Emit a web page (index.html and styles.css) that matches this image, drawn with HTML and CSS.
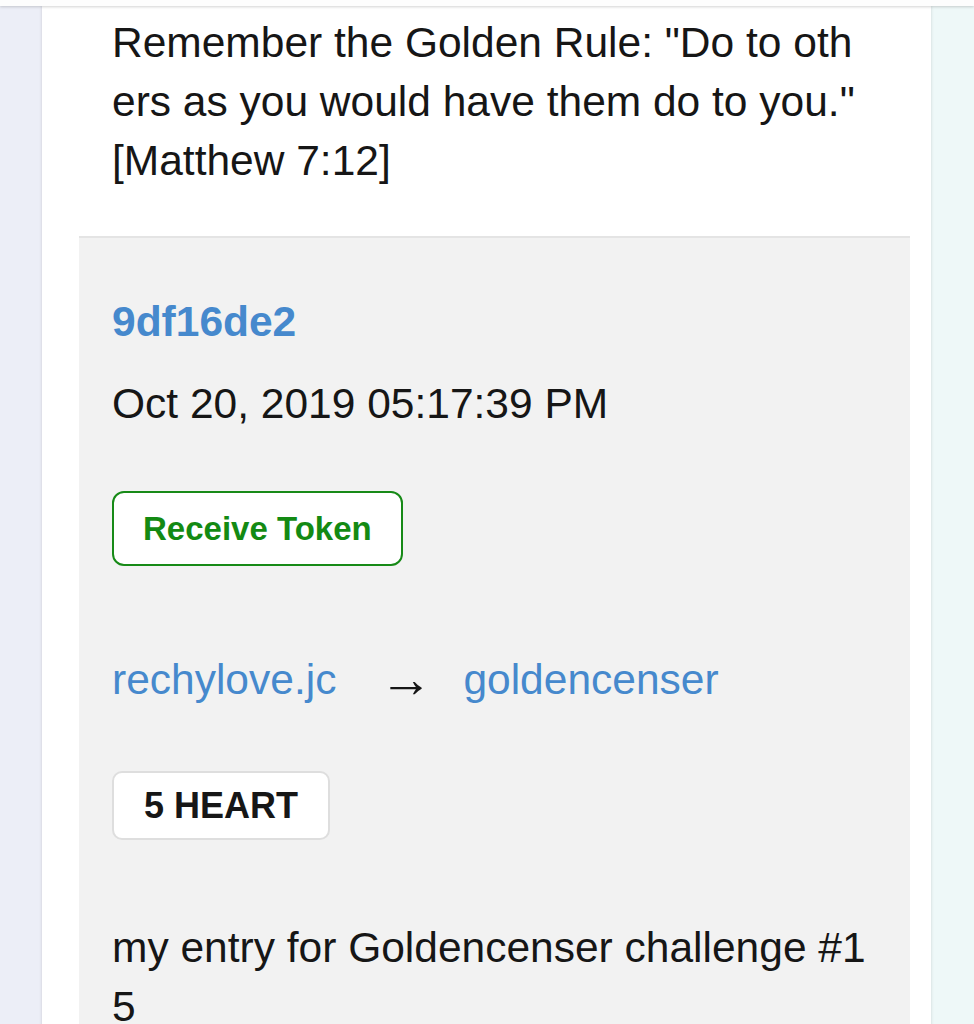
FILE: index.html
```html
<!DOCTYPE html>
<html lang="en">
<head>
    <meta charset="UTF-8">
    <meta name="viewport" content="width=device-width, initial-scale=1.0">
    <title>Token Transfer</title>
    <link rel="stylesheet" href="styles.css">
</head>
<body>
    <div class="topbar"></div>
    <div class="card">
        <p class="quote">Remember the Golden Rule: "Do to others as you would have them do to you." [Matthew 7:12]</p>
        <div class="tx">
            <a class="tx-id" href="#">9df16de2</a>
            <p class="tx-date">Oct 20, 2019 05:17:39 PM</p>
            <button class="btn-receive">Receive Token</button>
            <p class="transfer"><a href="#">rechylove.jc</a><span class="arrow">→</span><a href="#">goldencenser</a></p>
            <div class="badge">5 HEART</div>
            <p class="memo">my entry for Goldencenser challenge #15</p>
        </div>
    </div>
</body>
</html>
```

FILE: styles.css
```css
body {
    margin: 0;
    font-family: "Liberation Sans", Arial, sans-serif;
    color: #161616;
    background: linear-gradient(to right, #eceef7 50%, #eef8f8 50%);
}
a {
    color: #4689cd;
    text-decoration: none;
}
.topbar {
    position: relative;
    z-index: 1;
    height: 6px;
    background: #fdfdfd;
    box-shadow: 0 1px 3px rgba(0, 0, 0, 0.18);
}
.card {
    margin: 0 43px 0 42px;
    padding: 7px 21px 0 37px;
    background: #fff;
    box-shadow: 0 0 3px rgba(0, 0, 0, 0.15);
}
.quote {
    margin: 0 40px 0 33px;
    font-size: 42.5px;
    line-height: 59px;
    word-break: break-all;
}
.tx {
    margin-top: 46px;
    padding: 54px 40px 0 33px;
    background: #f2f2f2;
    border-top: 2px solid #e4e4e4;
    font-size: 42.5px;
    line-height: 59px;
}
.tx p {
    margin: 0;
}
.tx-id {
    display: block;
    font-weight: bold;
}
.tx-date {
    margin-top: 23px !important;
}
.btn-receive {
    display: block;
    margin-top: 58px;
    padding: 16px 29px;
    font-family: inherit;
    font-size: 33px;
    font-weight: bold;
    line-height: 39px;
    color: #138a13;
    background: #fff;
    border: 2.5px solid #178a17;
    border-radius: 12px;
}
.transfer {
    margin-top: 83px !important;
}
.arrow {
    display: inline-block;
    width: 115px;
    margin-left: 12px;
    font-size: 53px;
    line-height: 59px;
    vertical-align: -3px;
    text-align: center;
    color: #161616;
}
.badge {
    width: fit-content;
    margin-top: 62px;
    padding: 12px 30px;
    font-size: 36px;
    font-weight: bold;
    line-height: 41px;
    background: #fff;
    border: 2px solid #dedede;
    border-radius: 10px;
}
.memo {
    margin-top: 78px !important;
    word-break: break-all;
}
```
